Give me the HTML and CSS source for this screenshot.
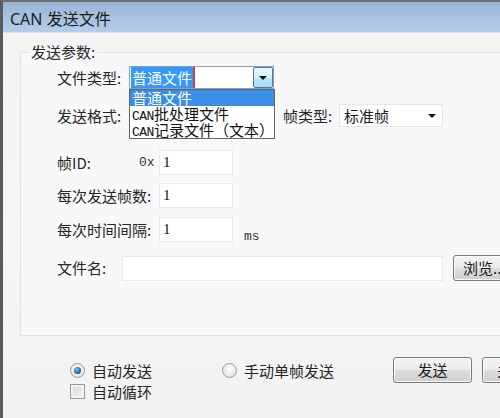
FILE: index.html
```html
<!DOCTYPE html>
<html lang="zh">
<head>
<meta charset="utf-8">
<title>CAN 发送文件</title>
<link rel="stylesheet" href="styles.css">
</head>
<body>
<div class="window">
  <div class="titlebar">CAN 发送文件</div>
  <div class="content">
    <fieldset class="group">
      <legend class="group-title">发送参数:</legend>

      <div class="row row-type">
        <span class="label w72">文件类型:</span>
        <div class="combo combo-open">
          <span class="combo-text"><span class="sel">普通文件</span></span>
          <span class="combo-btn"><span class="arrow"></span></span>
          <ul class="droplist">
            <li class="active">普通文件</li>
            <li><span class="mono">CAN</span>批处理文件</li>
            <li><span class="mono">CAN</span>记录文件（文本）</li>
          </ul>
        </div>
      </div>

      <div class="row row-fmt">
        <span class="label w72">发送格式:</span>
        <div class="combo combo-fmt"></div>
        <span class="label frame-type">帧类型:</span>
        <div class="combo combo-plain">
          <span class="combo-text">标准帧</span>
          <span class="arrow small"></span>
        </div>
      </div>

      <div class="row row-id">
        <span class="label w82">帧ID:</span>
        <span class="prefix">0x</span>
        <div class="input">1</div>
      </div>

      <div class="row row-count">
        <span class="label w102">每次发送帧数:</span>
        <div class="input">1</div>
      </div>

      <div class="row row-interval">
        <span class="label w102">每次时间间隔:</span>
        <div class="input">1</div>
        <span class="unit">ms</span>
      </div>

      <div class="row row-file">
        <span class="label w65">文件名:</span>
        <div class="input input-wide"></div>
        <button class="btn btn-browse">浏览...</button>
      </div>
    </fieldset>

    <div class="bottom">
      <div class="bottom-row">
        <label class="opt opt-auto"><span class="radio checked"></span>自动发送</label>
        <label class="opt opt-manual"><span class="radio"></span>手动单帧发送</label>
        <button class="btn btn-send">发送</button>
        <button class="btn btn-close">关闭</button>
      </div>
      <label class="opt opt-loop"><span class="check"></span>自动循环</label>
    </div>
  </div>
</div>
</body>
</html>
```

FILE: styles.css
```css
* { box-sizing: border-box; }
html, body {
  margin: 0;
  padding: 0;
  width: 500px;
  height: 418px;
  overflow: hidden;
  background: #f3f3f3;
}
body {
  font-family: "Noto Sans CJK SC", "Noto Sans", sans-serif;
  color: #222;
}
.window {
  width: 520px;
  height: 418px;
  border-left: 3px solid #5b5b5b;
  border-top: 2px solid #6e6e6e;
  background: linear-gradient(180deg, #f4f4f4 0%, #f6f6f6 60%, #f2f2f2 100%);
}
.titlebar {
  height: 31px;
  padding-left: 7px;
  padding-top: 2px;
  line-height: 30px;
  font-size: 16px;
  color: #1d1d1d;
  background: linear-gradient(180deg, #98b4d5 0%, #a9c3e2 55%, #b4cde9 100%);
  border-bottom: 1px solid #d6e2ef;
  font-family: "Noto Sans", "Noto Sans CJK SC", sans-serif;
}
.content {
  position: relative;
  height: 384px;
}
.group {
  margin: 10px 0 0 17px;
  padding: 0 0 54px 0;
  border: 1px solid #e3e3e3;
  border-right: none;
  background: #f8f8f8;
  min-width: 0;
}
.group-title {
  margin-left: 8px;
  padding: 0 2px;
  font-size: 15px;
  line-height: 18px;
  color: #2a2a2a;
}
.row {
  display: flex;
  align-items: center;
  padding-left: 36px;
  font-size: 15px;
}
.row > * { flex: none; }
.label { color: #262626; line-height: 18px; }
.w65 { width: 65px; }
.w72 { width: 72px; }
.w82 { width: 82px; }
.w102 { width: 102px; }

.row-type { margin-top: 5px; height: 23px; position: relative; z-index: 2; }
.row-fmt { margin-top: 15px; height: 23px; }
.row-id { margin-top: 23px; height: 25px; }
.row-count { margin-top: 8px; height: 25px; }
.row-interval { margin-top: 9px; height: 25px; }
.row-file { margin-top: 13px; height: 26px; }

.combo {
  position: relative;
  height: 23px;
  display: flex;
  align-items: center;
  background: #fff;
}
.combo-open {
  width: 145px;
  border: 1px solid #8e9fb4;
}
.combo-text {
  flex: 1;
  padding-left: 1px;
  line-height: 18px;
  white-space: nowrap;
}
.sel {
  background: #3399ff;
  color: #fff;
  padding: 0 1px;
  border-right: 2px solid #d63a3a;
}
.combo-btn {
  width: 20px;
  height: 21px;
  border: 1px solid #3c7fb1;
  border-radius: 2px;
  background: linear-gradient(180deg, #eaf6fd 0%, #d9f0fc 50%, #bee6fd 51%, #a7d9f5 100%);
  display: flex;
  align-items: center;
  justify-content: center;
}
.arrow {
  width: 0;
  height: 0;
  border-left: 4px solid transparent;
  border-right: 4px solid transparent;
  border-top: 4px solid #111;
}
.arrow.small { margin-right: 6px; }
.droplist {
  position: absolute;
  left: -1px;
  top: 22px;
  width: 146px;
  margin: 0;
  padding: 0;
  list-style: none;
  background: #fff;
  border: 1px solid #646464;
  font-size: 15px;
}
.droplist li {
  height: 16px;
  line-height: 16px;
  padding-left: 2px;
  white-space: nowrap;
  color: #111;
}
.droplist li.active { background: #3a8ee6; color: #fff; }
.mono { font-family: "Liberation Mono", monospace; font-size: 13px; letter-spacing: -0.5px; }

.combo-fmt { width: 145px; border: 1px solid #e2e2e2; }
.frame-type { margin-left: 9px; width: 56px; }
.combo-plain {
  width: 104px;
  border: 1px solid #e6e6e6;
}
.combo-plain .combo-text { padding-left: 4px; }

.prefix {
  width: 20px;
  font-family: "Liberation Mono", monospace;
  font-size: 13px;
  color: #333;
}
.input {
  width: 74px;
  height: 25px;
  background: #fff;
  border: 1px solid #e8e8e8;
  padding: 3px 0 0 3px;
  font-family: "Liberation Serif", serif;
  font-size: 15px;
  line-height: 16px;
  color: #111;
}
.unit {
  align-self: flex-end;
  margin-left: 11px;
  margin-bottom: -2px;
  font-family: "Liberation Mono", monospace;
  font-size: 13px;
  color: #333;
}
.input-wide { width: 321px; }

.btn {
  font-family: "Noto Sans CJK SC", sans-serif;
  font-size: 15px;
  color: #1a1a1a;
  height: 26px;
  padding: 0;
  border: 1px solid #7a7a7a;
  border-radius: 3px;
  background: linear-gradient(180deg, #f3f3f3 0%, #ebebeb 48%, #dddddd 52%, #cfcfcf 100%);
  box-shadow: inset 0 0 0 1px #fbfbfb;
  line-height: 22px;
  flex: none;
}
.btn-browse { margin-left: 10px; width: 60px; text-align: left; padding-left: 9px; }

.bottom { padding-top: 21px; }
.bottom-row {
  display: flex;
  align-items: center;
  height: 26px;
  font-size: 15px;
}
.bottom-row > * { flex: none; }
.opt {
  display: flex;
  align-items: center;
  font-size: 15px;
  color: #262626;
}
.opt-auto { margin-left: 67px; width: 152px; }
.opt-manual { width: 171px; }
.btn-send { width: 79px; }
.btn-close { width: 60px; margin-left: 10px; text-align: left; padding-left: 14px; }

.radio {
  flex: none;
  width: 15px;
  height: 15px;
  border-radius: 50%;
  border: 1px solid #9a9a9a;
  background: radial-gradient(circle at 50% 40%, #ffffff 0%, #e6e6e6 70%, #cfcfcf 100%);
  margin-right: 7px;
  position: relative;
}
.radio.checked::after {
  content: "";
  position: absolute;
  left: 3px;
  top: 3px;
  width: 7px;
  height: 7px;
  border-radius: 50%;
  background: radial-gradient(circle at 40% 35%, #7fc3f5 0%, #1f6fb8 55%, #0d3f7a 100%);
}
.opt-loop { margin-left: 67px; height: 16px; }
.check {
  flex: none;
  width: 15px;
  height: 15px;
  border: 1px solid #9a9a9a;
  background: linear-gradient(135deg, #d8d8d8 0%, #f4f4f4 100%);
  box-shadow: inset 0 0 0 2px #f3f3f3;
  margin-right: 7px;
}
```
